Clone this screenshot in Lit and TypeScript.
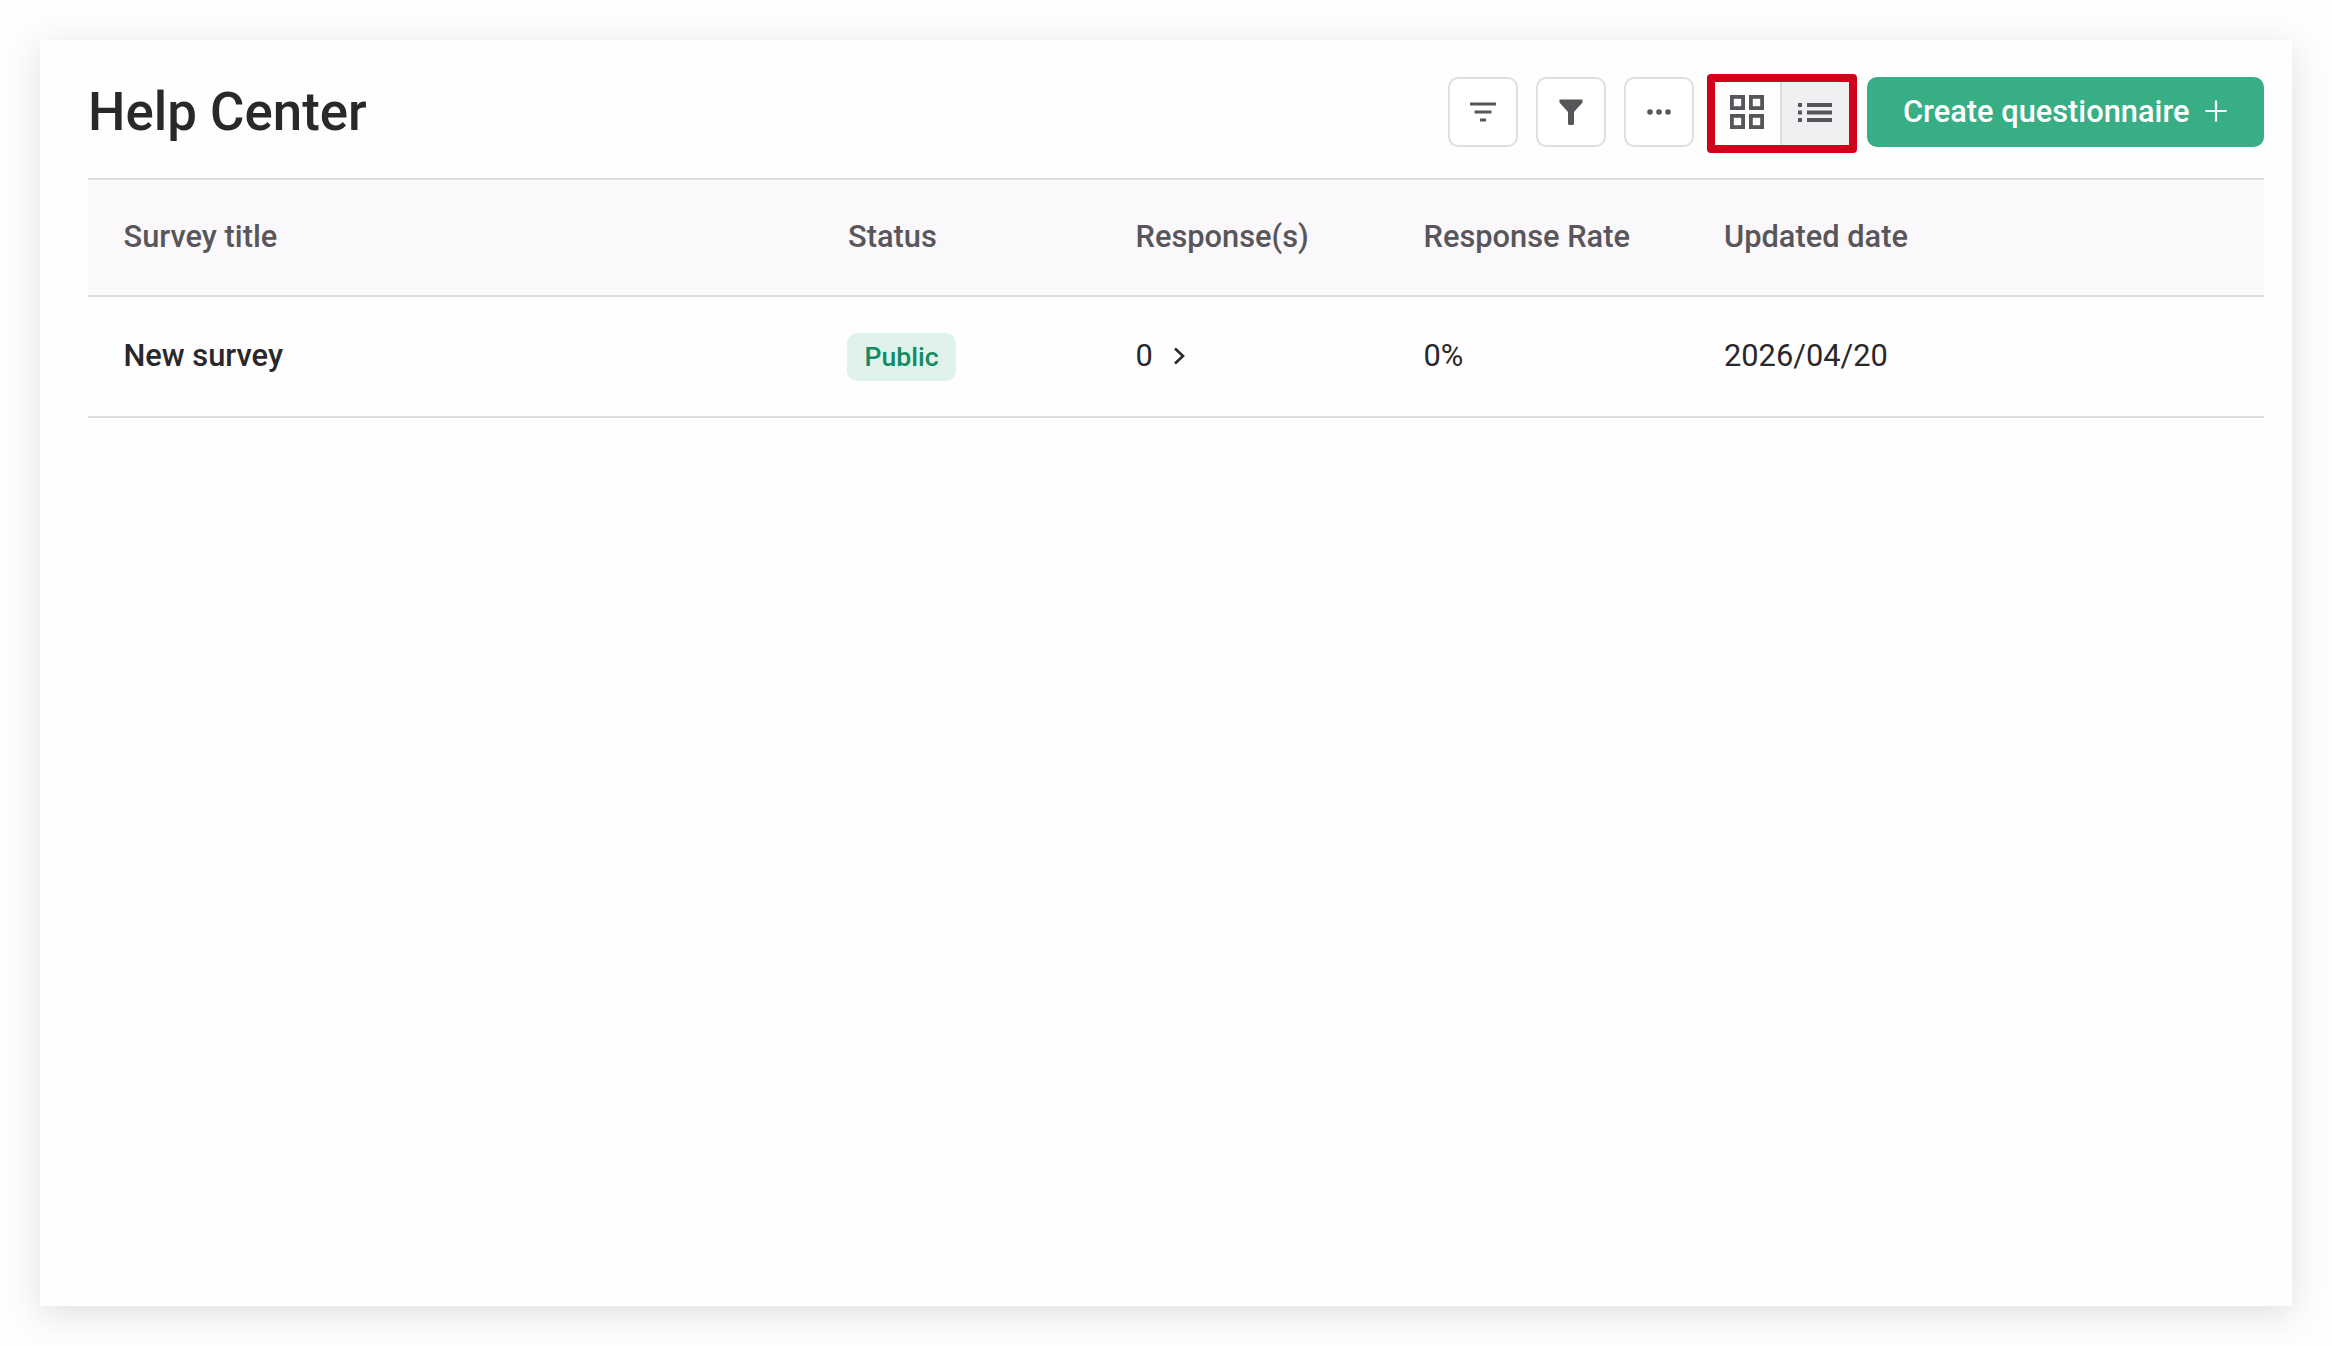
import { LitElement, html, css } from "lit";
import { customElement } from "lit/decorators.js";

@customElement("app-root")
export class AppRoot extends LitElement {
  static styles = css`
    :host {
      display: block;
      box-sizing: border-box;
      height: 1346px;
      padding: 40px;
      background: #fffeff;
      font-family: Roboto, "Liberation Sans", sans-serif;
      color: #2a282b;
      overflow: hidden;
    }
    .card {
      height: 1266px;
      background: #fefefe;
      box-shadow: 0 8px 34px rgba(70, 60, 80, 0.17);
      padding: 0 28px 0 48px;
      box-sizing: border-box;
    }
    .top {
      display: flex;
      align-items: flex-start;
      height: 140px;
      box-sizing: border-box;
      padding-top: 37px;
      border-bottom: 2px solid #dfdddf;
    }
    h1 {
      margin: 0;
      flex: 1;
      font-size: 52.8px;
      line-height: 70px;
      font-weight: 500;
      color: #2a282b;
    }
    .icon-btn {
      width: 70px;
      height: 70px;
      box-sizing: border-box;
      border: 2px solid #e0dee0;
      border-radius: 10px;
      background: #fff;
      display: flex;
      align-items: center;
      justify-content: center;
      margin-right: 18px;
      padding: 0;
    }
    .icon-btn.last { margin-right: 13px; }
    svg { display: block; fill: none; }
    .toggle {
      width: 150px;
      height: 79px;
      margin-top: -3px;
      box-sizing: border-box;
      border: 8px solid #d0021b;
      border-radius: 4px;
      display: grid;
      grid-template-columns: 65px 1fr;
      margin-right: 10px;
    }
    .toggle div {
      display: flex;
      align-items: center;
      justify-content: center;
      padding: 0 2px 3px 0;
    }
    .toggle .on { background: #f1eff2; border-left: 2px solid #dfdddf; }
    .create {
      width: 397px;
      height: 70px;
      border: 0;
      border-radius: 10px;
      background: #38ae84;
      color: #fff;
      font: 500 30.8px Roboto, "Liberation Sans", sans-serif;
      display: flex;
      align-items: center;
      gap: 15px;
      padding: 0 0 2px 36px;
      box-sizing: border-box;
    }
    .row {
      display: grid;
      grid-template-columns: 724.5px 287.5px 288px 300.5px 1fr;
      align-items: center;
      padding: 0 0 2px 35.5px;
      font-size: 30.8px;
      box-sizing: border-box;
    }
    .head {
      height: 117px;
      background: #faf8fb;
      border-bottom: 2px solid #dfdddf;
      color: #59565b;
      font-weight: 500;
    }
    .body {
      height: 121px;
      border-bottom: 2px solid #dfdddf;
      color: #2a282b;
    }
    .name { font-weight: 500; }
    .status { display: flex; margin: 3px 0 0 -1px; }
    .badge {
      height: 48px;
      line-height: 48px;
      padding: 0 17.5px;
      border-radius: 10px;
      background: #dff3ec;
      color: #138a62;
      font-size: 26.6px;
      font-weight: 500;
    }
    .count { display: flex; align-items: center; gap: 20px; }
  `;

  render() {
    return html`
      <div class="card">
        <div class="top">
          <h1>Help Center</h1>
          <button class="icon-btn">
            <svg width="28" height="24" viewBox="0 0 28 24" stroke="#58555a" stroke-width="3">
              <path d="M1 4h26M5.500 12h17M11 20h6" />
            </svg>
          </button>
          <button class="icon-btn">
            <svg width="24" height="26" viewBox="0 0 24 26">
              <path d="M0.500 0.500h23v3L15 13v11.500a1.500 1.500 0 0 1-1.500 1.500h-3A1.500 1.500 0 0 1 9 24.500V13L0.500 3.500z" fill="#58555a" />
            </svg>
          </button>
          <button class="icon-btn last">
            <svg width="24" height="6" viewBox="0 0 24 6">
              <circle cx="3" cy="3" r="2.800" fill="#58555a" />
              <circle cx="12" cy="3" r="2.800" fill="#58555a" />
              <circle cx="21" cy="3" r="2.800" fill="#58555a" />
            </svg>
          </button>
          <div class="toggle">
            <div>
              <svg width="34" height="34" viewBox="0 0 34 34" stroke="#58555a" stroke-width="3.800">
                <rect x="1.900" y="1.900" width="11.200" height="11.200" />
                <rect x="20.900" y="1.900" width="11.200" height="11.200" />
                <rect x="1.900" y="20.900" width="11.200" height="11.200" />
                <rect x="20.900" y="20.900" width="11.200" height="11.200" />
              </svg>
            </div>
            <div class="on">
              <svg width="34" height="19" viewBox="0 0 34 19" stroke="#58555a" stroke-width="4">
                <path d="M0 2h4M9 2h25M0 9.500h4M9 9.500h25M0 17h4M9 17h25" />
              </svg>
            </div>
          </div>
          <button class="create">
            <span>Create questionnaire</span>
            <svg width="22" height="22" viewBox="0 0 22 22" stroke="#fff" stroke-width="2.200">
              <path d="M0.500 11h21M11 0.500v21" />
            </svg>
          </button>
        </div>
        <div class="row head">
          <span>Survey title</span>
          <span>Status</span>
          <span>Response(s)</span>
          <span>Response Rate</span>
          <span>Updated date</span>
        </div>
        <div class="row body">
          <span class="name">New survey</span>
          <span class="status"><span class="badge">Public</span></span>
          <span class="count">
            <span>0</span>
            <svg width="12" height="18" viewBox="0 0 12 18" stroke="#2a282b" stroke-width="2.600">
              <path d="M2 1.500 10 9l-8 7.500" />
            </svg>
          </span>
          <span>0%</span>
          <span>2026/04/20</span>
        </div>
      </div>
    `;
  }
}
